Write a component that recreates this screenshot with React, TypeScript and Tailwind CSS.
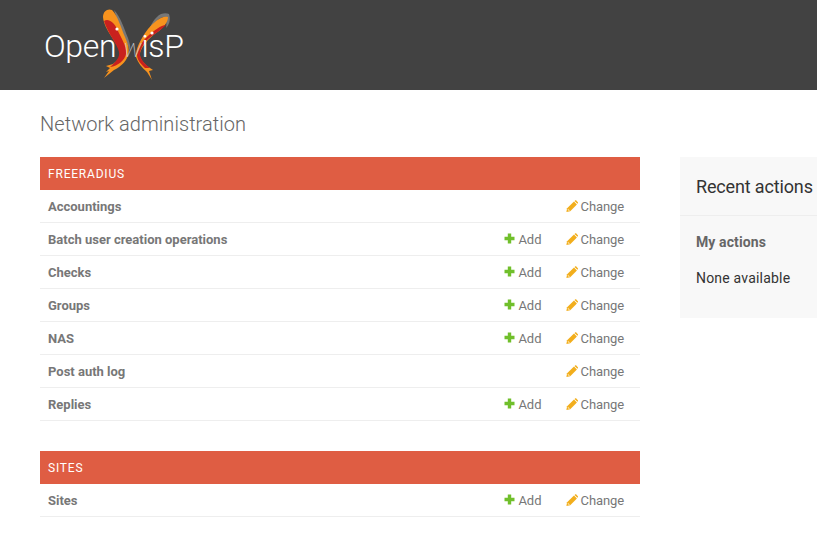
const font = "font-['Roboto',sans-serif]";

type Row = { name: string; add?: boolean };

const freeradius: Row[] = [
  { name: "Accountings" },
  { name: "Batch user creation operations", add: true },
  { name: "Checks", add: true },
  { name: "Groups", add: true },
  { name: "NAS", add: true },
  { name: "Post auth log" },
  { name: "Replies", add: true },
];

const sites: Row[] = [{ name: "Sites", add: true }];

function PlusIcon() {
  return (
    <svg width="11" height="11" viewBox="0 0 11 11" className="mr-[3px] -mt-[2px]">
      <path d="M3.8 0.5h3.4v3.3h3.3v3.4H7.2v3.3H3.8V7.2H0.5V3.8h3.3z" fill="#70bf2b" />
    </svg>
  );
}

function PencilIcon() {
  return (
    <svg width="12" height="12" viewBox="0 0 12 12" className="mr-[3px] -mt-[1px]">
      <path d="M8 1.6l2.9 2.9-6.7 6.7L0.4 11.9l0.7-3.6z" fill="#f2ae1c" />
      <path d="M8.9.7C9.4.2 10 .2 10.5.7l1.2 1.2c.4.4.4 1 0 1.5l-.3.4-2.9-2.9z" fill="#f2ae1c" />
      <path d="M2 8.7l1.8 1.8-.5.5-1-.2-.2-1-.6-.1z" fill="#fbe3ad" />
    </svg>
  );
}

function Logo() {
  return (
    <div className="relative w-[170px] h-[90px]">
      <svg width="170" height="90" viewBox="0 0 170 90" className="absolute left-0 top-0">
        <path d="M84 10C90 16 94 28 98 38C100 44 101 48 100 52C98 44 95 38 91 32C88 24 86 16 84 10z" fill="#777777" />
        <path d="M73 17C73 11 78 8 82 10C88 16 91 28 95 37C99 46 100 52 97 58C94 64 88 68 84 70L74 78L79 71L76 72L80 68L76 66L83 64C88 60 91 57 90 52C88 43 74 30 73 17z" fill="#f7931e" />
        <path d="M74 21C78 18 84 22 87 29C91 38 97 46 96 54C95 60 88 66 80 67C86 62 90 57 89 52C87 43 78 34 74 21z" fill="#c9211e" />
        <path d="M139 14C141 20 139 25 136 28C137 23 136 19 133 17C126 19 122 26 118 34C120 25 125 17 131 14C134 13 137 13 139 14z" fill="#777777" />
        <path d="M138 17C138 23 132 29 126 33C118 39 112 46 110 53C109 58 113 62 117 66L123 70L119 71L122 80L117 72C112 68 108 63 106 57C105 50 111 38 118 29C124 22 132 15 138 17z" fill="#f7931e" />
        <path d="M136 25C130 31 124 34 118 39C113 44 110 50 110 55C111 60 115 64 120 68L115 68C111 64 107 60 107 55C108 48 113 40 119 35C124 31 131 25 136 25z" fill="#c9211e" />
        <circle cx="87" cy="29" r="1.6" fill="#fff" />
        <circle cx="122" cy="33" r="1.6" fill="#fff" />
      </svg>
      <div className="absolute left-[14px] top-[27px] flex items-baseline text-white font-light text-[32px] leading-[38px] tracking-[-0.3px]">
        <span>Open</span>
        <span className="italic font-thin text-[25px] ml-[7px] text-[#cccccc]">w</span>
        <span>is</span>
        <span>P</span>
      </div>
    </div>
  );
}

function Module({ title, rows }: { title: string; rows: Row[] }) {
  return (
    <div className="mb-[30px]">
      <div className="h-[33px] bg-[#df5d43] px-2 flex items-center text-white text-[12px] tracking-[0.8px] uppercase">
        {title}
      </div>
      {rows.map((r) => (
        <div key={r.name} className="h-[33px] border-b border-[#eeeeee] flex items-center pl-2 pr-4 pt-[1px] text-[13px] text-[#777777]">
          <span className="flex-1 font-bold text-[#777777]">{r.name}</span>
          {r.add && (
            <span className="flex items-center mr-[24px]">
              <PlusIcon />
              Add
            </span>
          )}
          <span className="flex items-center tracking-[-0.1px]">
            <PencilIcon />
            Change
          </span>
        </div>
      ))}
    </div>
  );
}

export default function App() {
  return (
    <div className={`${font} h-[536px] overflow-hidden bg-white`}>
      <header className="h-[90px] bg-[#424242] pl-[30px]">
        <Logo />
      </header>
      <main className="pl-10 flex">
        <div className="w-[600px] shrink-0">
          <h1 className="font-light text-[20px] leading-[24px] tracking-[0.05px] text-[#666666] mt-[22px] mb-[21px]">
            Network administration
          </h1>
          <Module title="Freeradius" rows={freeradius} />
          <Module title="Sites" rows={sites} />
        </div>
        <aside className="ml-10 mt-[67px] flex-1 h-[161px] bg-[#f8f8f8] overflow-hidden">
          <h2 className="h-[59px] border-b border-[#eeeeee] pl-4 pt-[19px] text-[18px] leading-[22px] tracking-[-0.15px] font-normal text-[#333333] whitespace-nowrap">
            Recent actions
          </h2>
          <h3 className="pl-4 pt-[18px] text-[14px] leading-[16px] tracking-[0.1px] font-bold text-[#666666]">My actions</h3>
          <p className="pl-4 pt-5 text-[14px] leading-[16px] tracking-[0.2px] text-[#333333]">None available</p>
        </aside>
      </main>
    </div>
  );
}
